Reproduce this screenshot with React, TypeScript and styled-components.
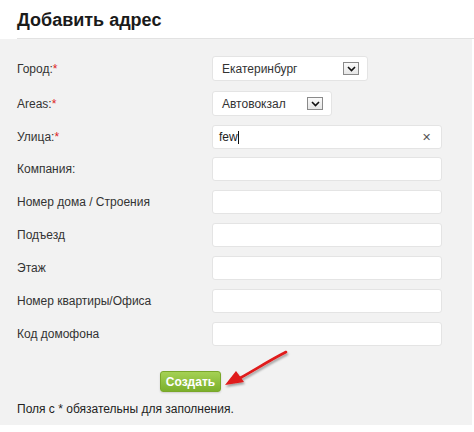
import React from 'react';
import styled, { createGlobalStyle } from 'styled-components';

const Global = createGlobalStyle`
  html, body { margin: 0; padding: 0; background: #fff; }
  body { font-family: "Liberation Sans", Arial, sans-serif; color: #333; }
`;

const Page = styled.div`
  width: 474px;
  height: 432px;
  background: #fff;
`;

const Header = styled.div`
  height: 39px;
  margin-left: 17px;
  border-bottom: 1px solid #e2e2e2;
  box-sizing: border-box;
  display: flex;
  align-items: center;
`;

const Title = styled.h1`
  margin: 0;
  padding-top: 3px;
  font-size: 18px;
  font-weight: bold;
  color: #1a1a1a;
`;

const Panel = styled.div`
  width: 472px;
  height: 386px;
  background: #f2f2f2;
  box-sizing: border-box;
  padding: 17px 0 0 17px;
  display: flex;
  flex-direction: column;
`;

const Row = styled.div<{ $gap: number }>`
  display: flex;
  align-items: center;
  margin-bottom: ${p => p.$gap}px;
`;

const Label = styled.div`
  width: 195px;
  font-size: 12px;
  color: #333;
`;

const Star = styled.span`
  color: #d22;
`;

const Select = styled.div<{ $w: number }>`
  width: ${p => p.$w}px;
  height: 25px;
  box-sizing: border-box;
  background: #fff;
  border: 1px solid #e4e4e4;
  border-radius: 3px;
  display: flex;
  align-items: center;
  justify-content: space-between;
  padding: 0 8px 0 9px;
  font-size: 12px;
  color: #333;
`;

const ArrowBox = styled.div`
  width: 16px;
  height: 13px;
  box-sizing: border-box;
  border: 1px solid #8a8a8a;
  background: linear-gradient(#fafafa, #e6e6e6);
  display: flex;
  align-items: center;
  justify-content: center;
`;

const Input = styled.div`
  width: 230px;
  height: 24px;
  box-sizing: border-box;
  background: #fff;
  border: 1px solid #e4e4e4;
  border-radius: 3px;
  display: flex;
  align-items: center;
  justify-content: space-between;
  padding: 0 10px 0 6px;
  font-size: 12px;
  color: #222;
`;

const Caret = styled.span`
  display: inline-block;
  width: 1px;
  height: 13px;
  background: #111;
  vertical-align: middle;
  margin-left: 0px;
`;

const Clear = styled.span`
  font-size: 11px;
  color: #555;
`;

const Actions = styled.div`
  position: relative;
  padding-left: 143px;
  margin-top: 16px;
`;

const Button = styled.button`
  width: 61px;
  height: 21px;
  border: 1px solid #7aa72a;
  border-radius: 3px;
  background: linear-gradient(#a5d154, #7bb02c);
  color: #fff;
  font-family: "Liberation Sans", Arial, sans-serif;
  font-size: 12px;
  font-weight: bold;
  padding: 0;
  box-shadow: 0 1px 2px rgba(0,0,0,0.15);
`;

const Pointer = styled.svg`
  position: absolute;
  left: 205px;
  top: -22px;
`;

const Note = styled.div`
  margin-top: 10px;
  font-size: 12px;
  color: #222;
`;

const Chevron = () => (
  <svg width="9" height="6" viewBox="0 0 9 6">
    <path d="M1 1 L4.5 4.5 L8 1" fill="none" stroke="#111" strokeWidth="1.6" />
  </svg>
);

const fields: [string, boolean][] = [
  ['Компания:', false],
  ['Номер дома / Строения', false],
  ['Подъезд', false],
  ['Этаж', false],
  ['Номер квартиры/Офиса', false],
  ['Код домофона', false],
];

export default function App() {
  return (
    <Page>
      <Global />
      <Header>
        <Title>Добавить адрес</Title>
      </Header>
      <Panel>
        <Row $gap={10}>
          <Label>Город:<Star>*</Star></Label>
          <Select $w={156}>
            <span>Екатеринбург</span>
            <ArrowBox><Chevron /></ArrowBox>
          </Select>
        </Row>
        <Row $gap={9}>
          <Label>Areas:<Star>*</Star></Label>
          <Select $w={120}>
            <span>Автовокзал</span>
            <ArrowBox><Chevron /></ArrowBox>
          </Select>
        </Row>
        <Row $gap={8}>
          <Label>Улица:<Star>*</Star></Label>
          <Input>
            <span>few<Caret /></span>
            <Clear>✕</Clear>
          </Input>
        </Row>
        {fields.map(([name]) => (
          <Row key={name} $gap={9}>
            <Label>{name}</Label>
            <Input />
          </Row>
        ))}
        <Actions>
          <Button>Создать</Button>
          <Pointer width="70" height="44" viewBox="0 0 70 44">
            <defs>
              <filter id="sh" x="-20%" y="-20%" width="140%" height="140%">
                <feDropShadow dx="1" dy="2" stdDeviation="1.2" floodColor="#000" floodOpacity="0.35" />
              </filter>
            </defs>
            <g filter="url(#sh)">
              <path d="M64 3 C50 10 34 20 18 29" fill="none" stroke="#e01a1a" strokeWidth="2.6" strokeLinecap="round" />
              <path d="M3 36 L14 22 L22 33 Z" fill="#e01a1a" />
            </g>
          </Pointer>
        </Actions>
        <Note>Поля с * обязательны для заполнения.</Note>
      </Panel>
    </Page>
  );
}
